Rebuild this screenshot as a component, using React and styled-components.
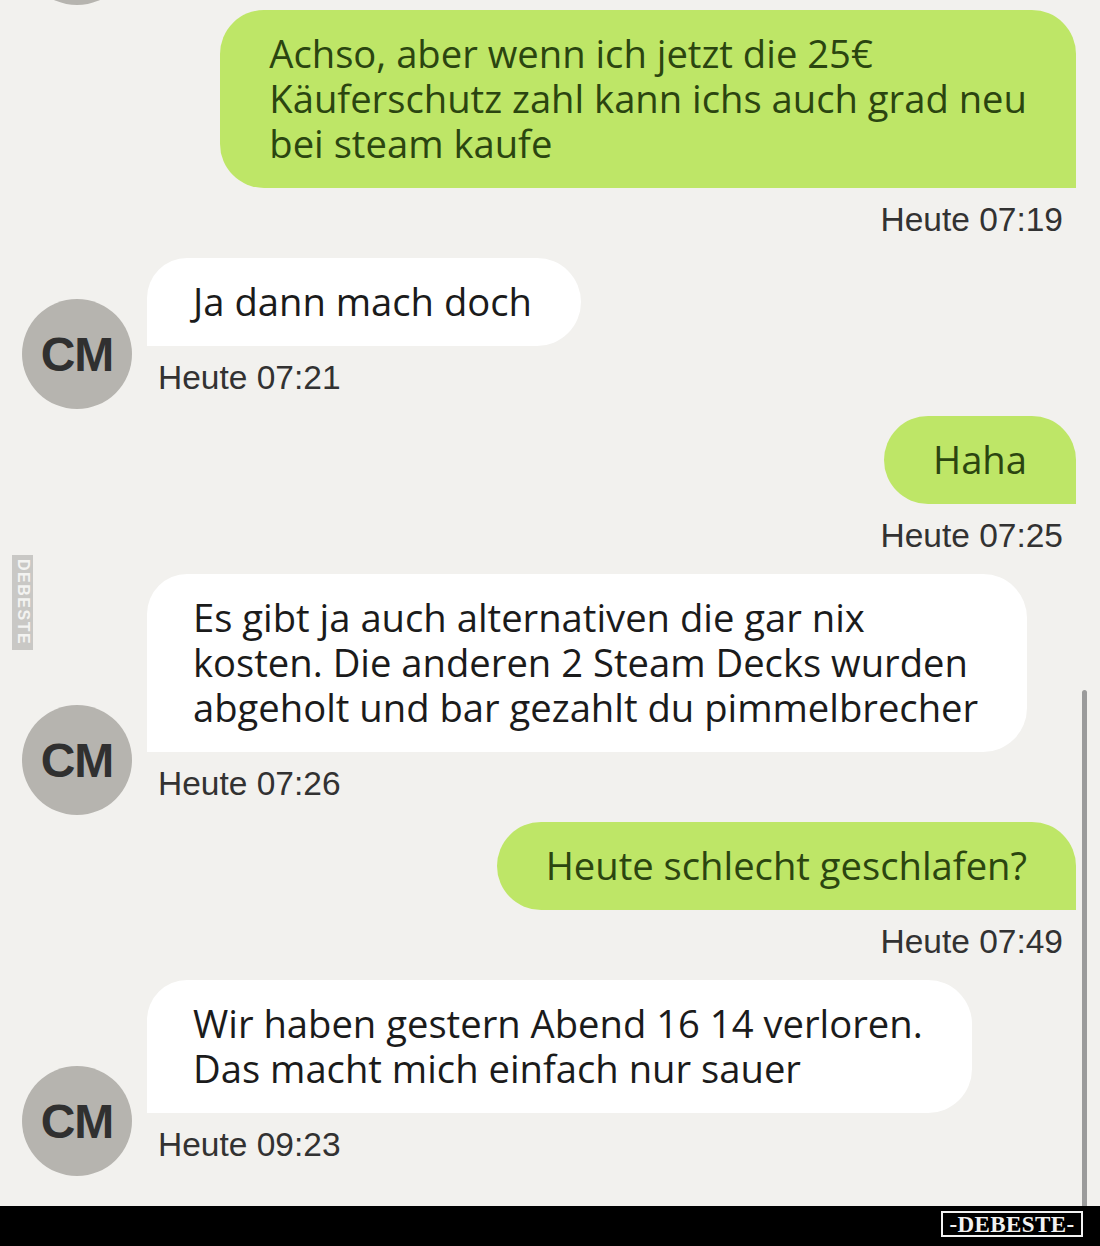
import React from "react";
import styled, { createGlobalStyle } from "styled-components";

const Global = createGlobalStyle`
  html, body { margin: 0; padding: 0; background: #f2f1ee; overflow: hidden; }
  * { box-sizing: border-box; }
`;

const Screen = styled.div`
  width: 1100px;
  height: 1246px;
  display: flex;
  flex-direction: column;
  background: #f2f1ee;
`;

const ChatArea = styled.div`
  position: relative;
  flex: 1;
  overflow: hidden;
`;

const MessageList = styled.div`
  display: flex;
  flex-direction: column;
  padding: 0 24px 0 22px;
`;

const Avatar = styled.div`
  flex: none;
  width: 110px;
  height: 110px;
  border-radius: 50%;
  background: #b6b4af;
  display: flex;
  align-items: center;
  justify-content: center;
  font-family: "Liberation Sans", Arial, sans-serif;
  font-weight: 700;
  font-size: 48px;
  color: #303030;
  letter-spacing: -1px;
`;

const PartialAvatar = styled(Avatar)`
  margin-top: -105px;
  margin-bottom: 5px;
`;

const OutGroup = styled.div`
  display: flex;
  flex-direction: column;
  align-items: flex-end;
  margin-bottom: 18px;
`;

const InGroup = styled.div`
  display: flex;
  align-items: flex-end;
  gap: 15px;
  margin-bottom: 7px;
`;

const InContent = styled.div`
  display: flex;
  flex-direction: column;
  align-items: flex-start;
  padding-bottom: 11px;
`;

const Bubble = styled.div`
  display: flex;
  flex-direction: column;
  font-family: "Open Sans", "Liberation Sans", sans-serif;
  font-size: 38.2px;
  white-space: nowrap;
  padding: 21px 49px 22px;
  background: ${(p) => (p.$out ? "#bee667" : "#ffffff")};
  color: ${(p) => (p.$out ? "#2b4510" : "#1b1b1b")};
  border-radius: ${(p) => (p.$out ? "44px 44px 0 44px" : "40px 44px 44px 0")};
  padding-left: ${(p) => (p.$out ? "49px" : "46px")};
`;

const Line = styled.div`
  height: 45px;
  line-height: 45px;
`;

const Stamp = styled.div`
  font-family: "Liberation Sans", Arial, sans-serif;
  font-size: 33.5px;
  line-height: 40px;
  color: #323232;
  margin-top: 12px;
  padding: ${(p) => (p.$out ? "0 13px 0 0" : "0 0 0 11px")};
`;

const Scrollbar = styled.div`
  position: absolute;
  right: 13px;
  top: 690px;
  bottom: 0;
  width: 5px;
  border-radius: 3px 3px 0 0;
  background: #9b9b9b;
`;

const SideMark = styled.div`
  position: absolute;
  left: 12px;
  top: 555px;
  width: 21px;
  height: 95px;
  background: #c9c8c5;
  color: #f3f3f1;
  writing-mode: vertical-rl;
  display: flex;
  align-items: center;
  justify-content: center;
  font-family: "Liberation Sans", Arial, sans-serif;
  font-weight: 700;
  font-size: 16px;
  letter-spacing: 1.5px;
`;

const Footer = styled.div`
  flex: none;
  height: 40px;
  background: #000;
  display: flex;
  justify-content: flex-end;
  align-items: flex-start;
  padding: 5px 17px 0 0;
`;

const Logo = styled.div`
  width: 142px;
  height: 26px;
  border: 2px solid #f2f2f2;
  display: flex;
  align-items: center;
  justify-content: center;
  font-family: "Liberation Serif", "Times New Roman", serif;
  font-weight: 700;
  font-size: 23px;
  letter-spacing: 0.4px;
  color: #f2f2f2;
  line-height: 1;
`;

const messages = [
  { out: true, lines: ["Achso, aber wenn ich jetzt die 25€", "Käuferschutz zahl kann ichs auch grad neu", "bei steam kaufe"], time: "Heute 07:19" },
  { out: false, lines: ["Ja dann mach doch"], time: "Heute 07:21" },
  { out: true, lines: ["Haha"], time: "Heute 07:25" },
  { out: false, lines: ["Es gibt ja auch alternativen die gar nix", "kosten. Die anderen 2 Steam Decks wurden", "abgeholt und bar gezahlt du pimmelbrecher"], time: "Heute 07:26" },
  { out: true, lines: ["Heute schlecht geschlafen?"], time: "Heute 07:49" },
  { out: false, lines: ["Wir haben gestern Abend 16 14 verloren.", "Das macht mich einfach nur sauer"], time: "Heute 09:23" },
];

const Lines = ({ lines }) => lines.map((l, i) => <Line key={i}>{l}</Line>);

export default function App() {
  return (
    <>
      <Global />
      <Screen>
        <ChatArea>
          <MessageList>
            <PartialAvatar />
            {messages.map((m, i) =>
              m.out ? (
                <OutGroup key={i}>
                  <Bubble $out>
                    <Lines lines={m.lines} />
                  </Bubble>
                  <Stamp $out>{m.time}</Stamp>
                </OutGroup>
              ) : (
                <InGroup key={i}>
                  <Avatar>CM</Avatar>
                  <InContent>
                    <Bubble>
                      <Lines lines={m.lines} />
                    </Bubble>
                    <Stamp>{m.time}</Stamp>
                  </InContent>
                </InGroup>
              )
            )}
          </MessageList>
          <SideMark>DEBESTE</SideMark>
          <Scrollbar />
        </ChatArea>
        <Footer>
          <Logo>-DEBESTE-</Logo>
        </Footer>
      </Screen>
    </>
  );
}
